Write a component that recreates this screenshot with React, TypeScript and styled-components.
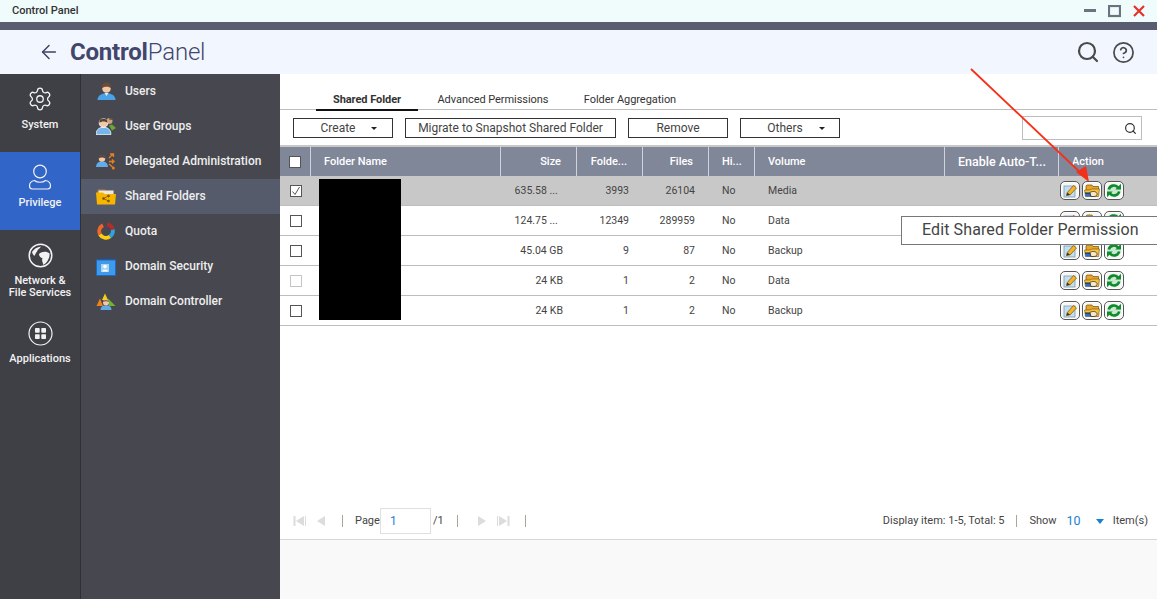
import React from "react";
import styled, { createGlobalStyle } from "styled-components";
import { ArrowLeft, Search, CircleHelp, Settings } from "lucide-react";

const Global = createGlobalStyle`
  html, body {
    margin: 0;
    padding: 0;
    background: #fff;
    overflow: hidden;
  }
  * {
    box-sizing: border-box;
  }
  body {
    font-family: Roboto, "Liberation Sans", sans-serif;
  }
`;

const Page = styled.div`
  position: relative;
  width: 1157px;
  height: 599px;
  display: flex;
  flex-direction: column;
  overflow: hidden;
`;

const TitleBar = styled.div`
  height: 22px;
  background: #effcfb;
  display: flex;
  align-items: center;
  justify-content: space-between;
  padding: 0 12px 2px 12px;
  font-size: 11px;
  font-weight: 500;
  color: #333;
`;

const WindowButtons = styled.div`
  display: flex;
  align-items: center;
  gap: 12px;
  margin-top: 2px;
`;

const Strip = styled.div`
  height: 8px;
  background: #5a5d72;
`;

const Header = styled.div`
  height: 44px;
  background: #f2f6ff;
  display: flex;
  align-items: center;
  padding: 0 22px 0 38px;
  color: #3f4261;
`;

const Logo = styled.div`
  margin-left: 10px;
  font-size: 24px;
  font-weight: 700;
  letter-spacing: -0.2px;
  color: #43466b;
  flex: 1;
  span {
    font-weight: 300;
  }
`;

const HeaderIcons = styled.div`
  display: flex;
  align-items: center;
  gap: 12px;
  color: #4a4a4a;
`;

const Body = styled.div`
  flex: 1;
  display: flex;
  min-height: 0;
`;

const Rail = styled.nav`
  width: 81px;
  background: #3f4046;
  border-right: 1px solid #2f3035;
  display: flex;
  flex-direction: column;
`;

const RailItem = styled.div<{ $active?: boolean }>`
  height: 78px;
  padding-top: 12px;
  display: flex;
  flex-direction: column;
  align-items: center;
  background: ${(p) => (p.$active ? "#3265c8" : "transparent")};
  color: #f2f2f2;
  font-size: 11px;
  font-weight: 500;
  line-height: 12px;
  text-align: center;
`;

const RailIcon = styled.div`
  height: 26px;
  display: flex;
  align-items: center;
  justify-content: center;
  margin-bottom: 7px;
`;

const SubNav = styled.nav`
  width: 199px;
  background: #47484f;
  display: flex;
  flex-direction: column;
`;

const SubItem = styled.div<{ $active?: boolean }>`
  height: 35px;
  padding-left: 15px;
  padding-bottom: 1px;
  display: flex;
  align-items: center;
  gap: 9px;
  background: ${(p) => (p.$active ? "#555b6b" : "transparent")};
  color: #eeeeee;
  font-size: 12px;
  font-weight: 500;
`;

const SubIcon = styled.span`
  width: 20px;
  display: flex;
  justify-content: center;
`;

const Main = styled.main`
  flex: 1;
  display: flex;
  flex-direction: column;
  background: #fff;
  min-width: 0;
`;

const Tabs = styled.div`
  height: 36px;
  padding: 20px 0 0 36px;
  display: flex;
  border-bottom: 1px solid #bdbdbd;
`;

const Tab = styled.div<{ $active?: boolean; $width: number }>`
  width: ${(p) => p.$width}px;
  height: 17px;
  text-align: center;
  font-size: 11px;
  line-height: 11px;
  font-weight: ${(p) => (p.$active ? 700 : 400)};
  color: #333;
  letter-spacing: -0.05px;
  border-bottom: ${(p) => (p.$active ? "2px solid #111" : "none")};
`;

const Toolbar = styled.div`
  height: 36px;
  padding: 8px 15px 0 13px;
  display: flex;
  gap: 12px;
`;

const ToolButton = styled.div<{ $width: number; $menu?: boolean }>`
  width: ${(p) => p.$width}px;
  height: 20px;
  border: 1px solid #333;
  padding-left: ${(p) => (p.$menu ? "12px" : "0")};
  display: flex;
  align-items: center;
  justify-content: center;
  font-size: 12px;
  color: #444;
  background: #fff;
`;

const Caret = styled.i`
  width: 0;
  height: 0;
  margin-left: 16px;
  border-left: 3px solid transparent;
  border-right: 3px solid transparent;
  border-top: 3px solid #222;
`;

const SearchBox = styled.div`
  width: 120px;
  height: 24px;
  margin: -2px 0 0 auto;
  border: 1px solid #bdbdbd;
  display: flex;
  align-items: center;
  justify-content: flex-end;
  padding-right: 4px;
  color: #333;
`;

const columns = "31px 190px 76px 66px 66px 46px 190px 114px 98px";

const HeadRow = styled.div`
  height: 31px;
  border-top: 2px solid #c8c8c8;
  margin-top: -1px;
  background: #7f8799;
  display: grid;
  grid-template-columns: ${columns};
`;

const HeadCell = styled.div<{ $align?: string; $big?: boolean; $flush?: boolean }>`
  display: flex;
  align-items: center;
  justify-content: ${(p) => p.$align || "flex-start"};
  padding: ${(p) => (p.$flush ? "0" : p.$align ? "0 15px 0 0" : "0 0 0 13px")};
  color: #fff;
  font-size: ${(p) => (p.$big ? "12.5px" : "11px")};
  font-weight: 500;
  white-space: nowrap;
  border-right: 1px solid #cfd2da;
  &:last-child {
    border-right: none;
  }
`;

const Row = styled.div<{ $selected?: boolean }>`
  height: 30px;
  display: grid;
  grid-template-columns: ${columns};
  background: ${(p) => (p.$selected ? "#c8c8c8" : "#fff")};
  border-bottom: 1px solid #bdbdbd;
`;

const Cell = styled.div<{ $align?: string; $flush?: boolean }>`
  display: flex;
  align-items: center;
  justify-content: ${(p) => p.$align || "flex-start"};
  padding: ${(p) => (p.$flush ? "0" : p.$align ? "0 14px 0 0" : "0 0 0 13px")};
  color: #444;
  font-size: 10.5px;
  white-space: pre;
`;

const Check = styled.span<{ $dim?: boolean }>`
  width: 12px;
  height: 12px;
  flex-shrink: 0;
  display: inline-flex;
  align-items: center;
  justify-content: center;
  background: #fff;
  border: 1px solid ${(p) => (p.$dim ? "#c4c4c4" : "#555")};
`;

const ActionGroup = styled.div`
  display: flex;
  gap: 2px;
  margin-left: -12px;
`;

const ActionButton = styled.span`
  width: 20px;
  height: 19px;
  border: 1px solid #555;
  border-radius: 5px;
  background: #f6f6f6;
  box-shadow: inset 0 0 0 1px #fff;
  display: flex;
  align-items: center;
  justify-content: center;
`;

const Spacer = styled.div`
  flex: 1;
`;

const Pager = styled.div`
  height: 38px;
  border-bottom: 1px solid #d8d8d8;
  padding: 0 9px 0 13px;
  display: flex;
  align-items: center;
  font-size: 11px;
  color: #444;
`;

const PagerIcons = styled.div<{ $gap: number }>`
  display: flex;
  align-items: center;
  gap: ${(p) => p.$gap}px;
  color: #dcdcdc;
`;

const Divider = styled.i<{ $left: number; $right: number }>`
  width: 1px;
  height: 12px;
  background: #aaa598;
  margin: 0 ${(p) => p.$right}px 0 ${(p) => p.$left}px;
`;

const PageInput = styled.div`
  width: 51px;
  height: 26px;
  border: 1px solid #e0e0e0;
  margin: 0 2px 0 0;
  padding-left: 9px;
  display: flex;
  align-items: center;
  color: #1b7fd6;
  font-size: 12px;
`;

const ShowValue = styled.span`
  color: #1b7fd6;
  font-size: 12.5px;
  margin-left: 10px;
`;

const BlueCaret = styled.i`
  width: 0;
  height: 0;
  margin: 1px 9px 0 15px;
  border-left: 4px solid transparent;
  border-right: 4px solid transparent;
  border-top: 5px solid #1b7fd6;
`;

const FooterBand = styled.div`
  height: 59px;
  background: #f9f9f9;
`;

const Redaction = styled.div`
  position: absolute;
  left: 319px;
  top: 179px;
  width: 82px;
  height: 141px;
  background: #000;
`;

const Tooltip = styled.div`
  position: absolute;
  left: 901px;
  top: 216px;
  width: 260px;
  height: 29px;
  background: #fff;
  border: 1px solid #777;
  padding: 0 0 2px 20px;
  display: flex;
  align-items: center;
  font-size: 16px;
  letter-spacing: 0.11px;
  color: #444;
  white-space: nowrap;
`;

const ArrowOverlay = styled.svg`
  position: absolute;
  left: 0;
  top: 0;
  pointer-events: none;
`;

const UserIcon = () => (
  <svg width="19" height="18" viewBox="0 0 19 18">
    <path d="M0.500 18c0-3.500 2.500-5.500 6-6.500h6c3.500 1 6 3 6 6.500z" fill="#4aa3e8" />
    <path d="M7.500 11h4l-2 3z" fill="#d9eefc" />
    <circle cx="9.500" cy="6.500" r="4.300" fill="#f3c9a5" />
    <path d="M5 6.500C4.500 2 7 .5 9.500 .5S14.500 2 14 6.500C13 4 6 4 5 6.500z" fill="#6b4c3a" />
  </svg>
);

const GroupIcon = () => (
  <svg width="20" height="18" viewBox="0 0 20 18">
    <circle cx="13.500" cy="4" r="3" fill="#c9a27f" />
    <path d="M13 2.500C13 .5 16.500 .5 16.500 3z" fill="#6b4c3a" />
    <path d="M13 8.500l3-1 4 3.500-4 2.500z" fill="#6aa832" />
    <path d="M0 17.500c0-4 2-6 5-7h5c3 1 5 3 5 7z" fill="#74b5ec" stroke="#fff" strokeWidth="0.700" />
    <circle cx="7.500" cy="6" r="4.300" fill="#f3c9a5" stroke="#fff" strokeWidth="0.800" />
    <path d="M3.500 6C3 2.500 5.500 1.800 7.500 1.800S12 2.500 11.500 6C10 4 5 4 3.500 6z" fill="#5b4033" />
  </svg>
);

const DelegateIcon = () => (
  <svg width="20" height="18" viewBox="0 0 20 18">
    <path d="M0 15c0-3 2-5 4-5.500h4c2 .5 4 2.500 4 5.500z" fill="#63acec" />
    <circle cx="6" cy="6.500" r="3.200" fill="#f3c9a5" />
    <path d="M2.800 6.500C2.500 4 4 3 6 3s3.500 1 3.200 3.500C8 5 4 5 2.800 6.500z" fill="#5b4033" />
    <g stroke="#e8801a" strokeWidth="1.300" fill="none">
      <path d="M13 6l4-4M14 2h3.500v3" />
      <path d="M13 9.500h5M16 7.500l2 2-2 2" />
      <path d="M13 12l3.500 3" />
    </g>
    <circle cx="17.300" cy="16" r="1.500" fill="#e8801a" />
  </svg>
);

const FolderIcon = () => (
  <svg width="20" height="17" viewBox="0 0 20 17">
    <path d="M1 2.500 2 1h7l1 1.500h8V6H1z" fill="#8a6d4a" />
    <rect x="2.500" y="2.500" width="15" height="4" fill="#eee8da" />
    <path d="M0 4.500h7l1.500 1.500H20l-1 10.500H1z" fill="#f7b500" />
    <g stroke="#7a5a00" strokeWidth="0.800" fill="#7a5a00">
      <path d="M7.500 10.500l5-2.500M7.500 10.500l5 2.500" fill="none" />
      <circle cx="7.500" cy="10.500" r="1" />
      <circle cx="12.500" cy="8" r="1" />
      <circle cx="12.500" cy="13" r="1" />
    </g>
  </svg>
);

const QuotaIcon = () => (
  <svg width="18" height="18" viewBox="0 0 18 18" fill="none" strokeWidth="3.800">
    <path d="M6 3.200A6.800 6.800 0 0 0 3 12.500" stroke="#f0662a" />
    <path d="M3 12.500A6.800 6.800 0 0 0 13 14.500" stroke="#f9cf10" />
    <path d="M13 14.500A6.800 6.800 0 0 0 15.700 7.500" stroke="#2da3e0" />
    <path d="M15.700 7.500A6.800 6.800 0 0 0 10 2.300" stroke="#b52b2b" />
  </svg>
);

const SecurityIcon = () => (
  <svg width="20" height="19" viewBox="0 0 20 19">
    <path d="M6 3 5 0l4 2.500h2L15 0l-1 3z" fill="#1c4f9e" />
    <rect x="0.500" y="3" width="19" height="15.500" fill="#3f9be8" stroke="#1f66c9" />
    <rect x="5" y="7" width="8" height="8" fill="#a9d5f5" />
    <circle cx="9" cy="9.500" r="1.800" fill="#fff" />
    <path d="M6 14.500c0-2.500 6-2.500 6 0z" fill="#fff" />
  </svg>
);

const ControllerIcon = () => (
  <svg width="20" height="17" viewBox="0 0 20 17">
    <path d="M7 13 .5 13 4 5.500z" fill="#f0801a" />
    <path d="M6 7 9 .5 12 7z" fill="#f5cf1a" />
    <path d="M12 5.500 19.500 13H13z" fill="#6cb52d" />
    <path d="M4.500 17c0-3 2-4 3-4.500h5c1 .5 3 1.500 3 4.500z" fill="#63a9e6" />
    <circle cx="10" cy="9.500" r="3" fill="#f3c9a5" />
    <path d="M7 9c0-2.500 6-2.500 6 0-1.500-1-4.500-1-6 0z" fill="#6b4c3a" />
  </svg>
);

const PrivilegeIcon = () => (
  <svg width="24" height="26" viewBox="0 0 24 26" fill="none" stroke="#f2f2f2" strokeWidth="1.200">
    <circle cx="12" cy="7.500" r="6.300" />
    <path d="M6.500 16.500C3.500 17 1.500 19 1.500 22c0 2 1 3 3 3h15c2 0 3-1 3-3 0-3-2-5-5-5.500-3 2.300-8 2.300-11 0z" />
  </svg>
);

const GlobeIcon = () => (
  <svg width="25" height="25" viewBox="0 0 25 25">
    <circle cx="12.500" cy="12.500" r="11.300" fill="none" stroke="#f2f2f2" strokeWidth="1.500" />
    <path d="M4 9c2-3 5-5 9-5.500-1 2-3 2.500-3.500 4S7.500 10 7 12 4.500 11 4 9z" fill="#f2f2f2" />
    <path d="M11 11c3-3 8-3 10.500-.5.500 4-2 9-6 11.500-1-3-2-5-1-7-2 0-3.500-2-3.500-4z" fill="#f2f2f2" />
  </svg>
);

const AppsIcon = () => (
  <svg width="25" height="25" viewBox="0 0 25 25">
    <circle cx="12.500" cy="12.500" r="11.500" fill="none" stroke="#f2f2f2" strokeWidth="1.200" />
    <g fill="#f2f2f2">
      <rect x="7" y="7" width="4.700" height="4.700" rx="0.800" />
      <rect x="13.300" y="7" width="4.700" height="4.700" rx="0.800" />
      <rect x="7" y="13.300" width="4.700" height="4.700" rx="0.800" />
      <rect x="13.300" y="13.300" width="4.700" height="4.700" rx="0.800" />
    </g>
  </svg>
);

const EditIcon = () => (
  <svg width="15" height="14" viewBox="0 0 15 14">
    <rect x="1" y="2" width="11" height="11" fill="#bfe0f2" stroke="#7f98aa" strokeWidth="0.800" />
    <path d="M3.500 11.500l.8-3L10.500 1.500l3 2.500-6.300 6.800z" fill="#f5b52a" stroke="#7a4d00" strokeWidth="0.700" />
    <path d="M3.500 11.500l.8-3 2.700 2.300z" fill="#333" />
  </svg>
);

const PermissionIcon = () => (
  <svg width="16" height="14" viewBox="0 0 16 14">
    <path d="M2 4V2l1-1h5l1 1.500h5.500V9H2z" fill="#e7a52b" stroke="#5a3a00" strokeWidth="0.600" />
    <path d="M.5 6h6l1-1h8l-1 7.500H1.500z" fill="#f9c23a" stroke="#5a3a00" strokeWidth="0.500" />
    <path d="M1 9h7v3.500H1.500z" fill="#2b6fc4" />
    <path d="M6 8.500c2-1.500 6-1.500 7 1 .5 1.500-1 3-3 3H7z" fill="#fbe6c8" stroke="#222" strokeWidth="0.700" />
    <path d="M1 8.500h5v1H1z" fill="#222" />
  </svg>
);

const RefreshIcon = () => (
  <svg width="16" height="15" viewBox="0 0 16 15" fill="none">
    <ellipse cx="8" cy="7.500" rx="7" ry="6.800" fill="#c9ead0" />
    <path d="M2.800 6.500a5.300 5.300 0 0 1 9.400-1.800" stroke="#0f8a2c" strokeWidth="2.600" />
    <path d="M9.300 6.500h5.700V.8z" fill="#0f8a2c" />
    <path d="M13.200 8.500a5.300 5.300 0 0 1-9.400 1.800" stroke="#0f8a2c" strokeWidth="2.600" />
    <path d="M6.700 8.500H1v5.700z" fill="#0f8a2c" />
  </svg>
);

const Triangle = ({ flip, bar, color = "#dcdcdc" }: { flip?: boolean; bar?: boolean; color?: string }) => (
  <svg width="13" height="10" viewBox="0 0 13 10" style={flip ? { transform: "scaleX(-1)" } : undefined}>
    <path d="M2 0l8 5-8 5z" fill={color} />
    {bar && <path d="M10.500 0H12.500V10H10.500zM0 0H1V10H0z" fill={color} />}
  </svg>
);

const subItems = [
  { label: "Users", icon: <UserIcon /> },
  { label: "User Groups", icon: <GroupIcon /> },
  { label: "Delegated Administration", icon: <DelegateIcon /> },
  { label: "Shared Folders", icon: <FolderIcon />, active: true },
  { label: "Quota", icon: <QuotaIcon /> },
  { label: "Domain Security", icon: <SecurityIcon /> },
  { label: "Domain Controller", icon: <ControllerIcon /> },
];

const rows = [
  { size: "635.58 ...\u00a0\u00a0", folders: "3993", files: "26104", volume: "Media", selected: true },
  { size: "124.75 ...\u00a0\u00a0", folders: "12349", files: "289959", volume: "Data" },
  { size: "45.04 GB", folders: "9", files: "87", volume: "Backup" },
  { size: "24 KB", folders: "1", files: "2", volume: "Data", dim: true },
  { size: "24 KB", folders: "1", files: "2", volume: "Backup" },
];

export default function App() {
  return (
    <Page>
      <Global />
      <TitleBar>
        <span>Control Panel</span>
        <WindowButtons>
          <svg width="12" height="12" viewBox="0 0 12 12">
            <rect y="4" width="12" height="3" fill="#6b7280" />
          </svg>
          <svg width="13" height="13" viewBox="0 0 13 13">
            <rect x="1" y="1" width="11" height="10" fill="none" stroke="#6b7280" strokeWidth="2.200" />
          </svg>
          <svg width="12" height="12" viewBox="0 0 12 12">
            <path d="M1 1l10 10M11 1 1 11" stroke="#e8302a" strokeWidth="2.200" />
          </svg>
        </WindowButtons>
      </TitleBar>
      <Strip />
      <Header>
        <ArrowLeft size={22} strokeWidth={1.6} />
        <Logo>
          Control<span>Panel</span>
        </Logo>
        <HeaderIcons>
          <Search size={24} strokeWidth={2.2} style={{ marginTop: -1 }} />
          <CircleHelp size={23} strokeWidth={1.8} />
        </HeaderIcons>
      </Header>
      <Body>
        <Rail>
          <RailItem>
            <RailIcon>
              <Settings size={26} strokeWidth={1.2} />
            </RailIcon>
            System
          </RailItem>
          <RailItem $active>
            <RailIcon>
              <PrivilegeIcon />
            </RailIcon>
            Privilege
          </RailItem>
          <RailItem>
            <RailIcon>
              <GlobeIcon />
            </RailIcon>
            Network &<br />
            File Services
          </RailItem>
          <RailItem>
            <RailIcon>
              <AppsIcon />
            </RailIcon>
            Applications
          </RailItem>
        </Rail>
        <SubNav>
          {subItems.map((item) => (
            <SubItem key={item.label} $active={item.active}>
              <SubIcon>{item.icon}</SubIcon>
              {item.label}
            </SubItem>
          ))}
        </SubNav>
        <Main>
          <Tabs>
            <Tab $active $width={102}>
              Shared Folder
            </Tab>
            <Tab $width={150}>Advanced Permissions</Tab>
            <Tab $width={124}>Folder Aggregation</Tab>
          </Tabs>
          <Toolbar>
            <ToolButton $width={100} $menu>
              Create
              <Caret />
            </ToolButton>
            <ToolButton $width={211}>Migrate to Snapshot Shared Folder</ToolButton>
            <ToolButton $width={100}>Remove</ToolButton>
            <ToolButton $width={100} $menu>
              Others
              <Caret />
            </ToolButton>
            <SearchBox>
              <Search size={13} strokeWidth={2.2} />
            </SearchBox>
          </Toolbar>
          <HeadRow>
            <HeadCell $align="center" $flush>
              <Check />
            </HeadCell>
            <HeadCell>Folder Name</HeadCell>
            <HeadCell $align="flex-end">Size</HeadCell>
            <HeadCell $align="flex-end">Folde...</HeadCell>
            <HeadCell $align="flex-end">Files</HeadCell>
            <HeadCell>Hi...</HeadCell>
            <HeadCell>Volume</HeadCell>
            <HeadCell $big>Enable Auto-T...</HeadCell>
            <HeadCell>Action</HeadCell>
          </HeadRow>
          {rows.map((row, i) => (
            <Row key={i} $selected={row.selected}>
              <Cell $align="center" $flush>
                <Check $dim={row.dim}>
                  {row.selected && (
                    <svg width="10" height="10" viewBox="0 0 10 10">
                      <path d="M1.500 5.500 4 8.500 8.500 1" fill="none" stroke="#555" strokeWidth="1" />
                    </svg>
                  )}
                </Check>
              </Cell>
              <Cell />
              <Cell $align="flex-end">{row.size}</Cell>
              <Cell $align="flex-end">{row.folders}</Cell>
              <Cell $align="flex-end">{row.files}</Cell>
              <Cell>No</Cell>
              <Cell>{row.volume}</Cell>
              <Cell />
              <Cell>
                <ActionGroup>
                  <ActionButton>
                    <EditIcon />
                  </ActionButton>
                  <ActionButton>
                    <PermissionIcon />
                  </ActionButton>
                  <ActionButton>
                    <RefreshIcon />
                  </ActionButton>
                </ActionGroup>
              </Cell>
            </Row>
          ))}
          <Spacer />
          <Pager>
            <PagerIcons $gap={8}>
              <Triangle flip bar />
              <Triangle flip />
            </PagerIcons>
            <Divider $left={15} $right={12} />
            Page
            <PageInput>1</PageInput>
            /1
            <Divider $left={13} $right={18} />
            <PagerIcons $gap={8}>
              <Triangle />
              <Triangle bar />
            </PagerIcons>
            <Divider $left={15} $right={0} />
            <Spacer />
            Display item: 1-5, Total: 5
            <Divider $left={12} $right={12} />
            Show
            <ShowValue>10</ShowValue>
            <BlueCaret />
            Item(s)
          </Pager>
          <FooterBand />
        </Main>
      </Body>
      <Redaction />
      <Tooltip>Edit Shared Folder Permission</Tooltip>
      <ArrowOverlay width="1157" height="599" viewBox="0 0 1157 599">
        <path d="M971 69 1084 176" stroke="#f5301a" strokeWidth="1.800" fill="none" />
        <path d="M1089 182 1076 172 1086 166z" fill="#f5301a" />
      </ArrowOverlay>
    </Page>
  );
}
